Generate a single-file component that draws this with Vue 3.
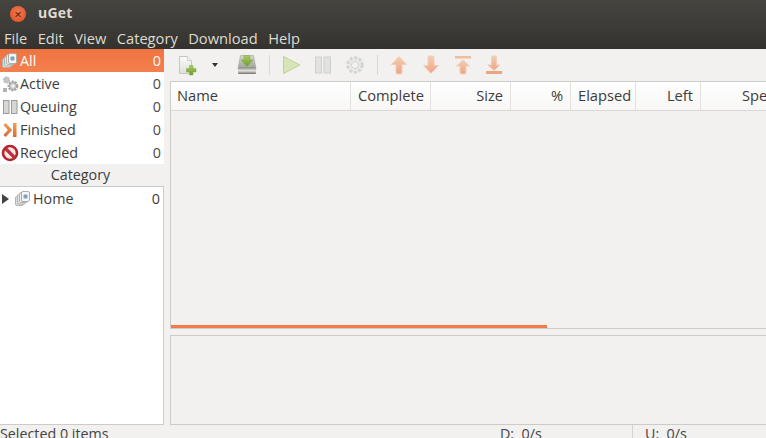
<script setup>
const states = [
  { name: 'All', icon: 'all', active: true },
  { name: 'Active', icon: 'active' },
  { name: 'Queuing', icon: 'queue' },
  { name: 'Finished', icon: 'finished' },
  { name: 'Recycled', icon: 'recycled' },
]
const menus = ['File', 'Edit', 'View', 'Category', 'Download', 'Help']
const cols = [
  { label: 'Name', w: 180, left: true },
  { label: 'Complete', w: 80 },
  { label: 'Size', w: 80 },
  { label: '%', w: 60 },
  { label: 'Elapsed', w: 65 },
  { label: 'Left', w: 65 },
  { label: 'Speed', w: 90, left: true, pad: true },
]
</script>

<template>
  <div class="win">
    <svg width="0" height="0" class="defs">
      <defs>
        <linearGradient id="arrow" x1="0" y1="0" x2="0" y2="1"><stop offset="0" stop-color="#f4cdb2"/><stop offset="1" stop-color="#eca584"/></linearGradient>
        <linearGradient id="disk" x1="0" y1="0" x2="0" y2="1"><stop offset="0" stop-color="#d6d6d2"/><stop offset="1" stop-color="#a2a29c"/></linearGradient>
        <linearGradient id="tray" x1="0" y1="0" x2="0" y2="1"><stop offset="0" stop-color="#8c8c86"/><stop offset=".5" stop-color="#e4e4e0"/><stop offset="1" stop-color="#6f6f68"/></linearGradient>
        <linearGradient id="paper" x1="0" y1="0" x2="0" y2="1"><stop offset="0" stop-color="#fbfbf9"/><stop offset="1" stop-color="#dededa"/></linearGradient>
        <linearGradient id="green" x1="0" y1="0" x2="0" y2="1"><stop offset="0" stop-color="#a9cd62"/><stop offset="1" stop-color="#6f9c2d"/></linearGradient>
        <linearGradient id="fin" x1="0" y1="0" x2="0" y2="1"><stop offset="0" stop-color="#f0a05a"/><stop offset="1" stop-color="#dd6a2e"/></linearGradient>
        <g id="stack">
          <rect x="1.500" y="6.500" width="8" height="9" rx="1.500" fill="#dcdcda" stroke="#b4b4b2"/>
          <rect x="3.500" y="4.500" width="8" height="9.500" rx="1.500" fill="#e6e6e4" stroke="#b4b4b2"/>
          <rect x="5.500" y="2.500" width="8" height="10" rx="1.500" fill="#eeeeec" stroke="#b4b4b2"/>
          <rect x="7.500" y="1.500" width="8" height="10" rx="1.500" fill="#f6f6f4" stroke="#acacac"/>
          <rect x="9.500" y="4.500" width="4" height="4" rx="1" fill="#7f9fc4"/>
        </g>
      </defs>
    </svg>

    <header class="titlebar">
      <div class="close"><span>×</span></div>
      <div class="title">uGet</div>
    </header>
    <nav class="menubar">
      <span v-for="m in menus" :key="m" class="menu">{{ m }}</span>
    </nav>

    <div class="body">
      <aside class="side">
        <ul class="states">
          <li v-for="s in states" :key="s.name" class="state" :class="{ on: s.active }">
            <svg class="sicon" width="18" height="18" viewBox="0 0 18 18">
              <use v-if="s.icon === 'all'" href="#stack" />
              <g v-else-if="s.icon === 'active'">
                <circle cx="12" cy="11" r="4.200" fill="#c9c9c7" stroke="#a2a2a0" stroke-width="2.400" stroke-dasharray="2 1"/>
                <circle cx="12" cy="11" r="1.700" fill="#f2f2f0"/>
                <circle cx="5.500" cy="5" r="3" fill="#c6c6c4" stroke="#adadab" stroke-dasharray="2 1"/>
                <rect x="2" y="13" width="4" height="4" fill="#b2b2b0"/>
              </g>
              <g v-else-if="s.icon === 'queue'">
                <rect x="2.500" y="2.500" width="5.500" height="13" fill="#d6d6d4" stroke="#9a9a98"/>
                <rect x="10.500" y="2.500" width="5.500" height="13" fill="#d6d6d4" stroke="#9a9a98"/>
              </g>
              <g v-else-if="s.icon === 'finished'">
                <path d="M3.500 3l5.500 6-5.500 6" fill="none" stroke="url(#fin)" stroke-width="3.200"/>
                <rect x="12" y="2" width="3.500" height="14" fill="url(#fin)"/>
              </g>
              <g v-else>
                <circle cx="9" cy="9" r="7" fill="#f6e9e6" stroke="#b5252d" stroke-width="2.600"/>
                <path d="M4.500 4.500l9 9" stroke="#c0303a" stroke-width="3.200"/>
              </g>
            </svg>
            <span class="sname">{{ s.name }}</span>
            <span class="scount">0</span>
          </li>
        </ul>
        <div class="cat-head">Category</div>
        <div class="tree">
          <div class="tree-row">
            <span class="expander"></span>
            <svg class="ticon" width="18" height="18" viewBox="0 0 18 18"><use href="#stack" /></svg>
            <span class="tname">Home</span>
            <span class="tcount">0</span>
          </div>
        </div>
      </aside>

      <main class="main">
        <div class="toolbar">
          <svg class="b-new" width="22" height="22" viewBox="0 0 22 22">
            <path d="M1.500 2.500h8l4 4v13h-12z" fill="url(#paper)" stroke="#c6c6c2"/>
            <path d="M9.500 2.500v4h4" fill="#f4f4f2" stroke="#d0d0cc"/>
            <path d="M11.500 11.500h3.500v3h3v3.500h-3v3h-3.500v-3h-3v-3.500h3z" fill="url(#green)" stroke="#7fa83a" stroke-width=".5"/>
          </svg>
          <span class="caret"></span>
          <svg class="b-dl" width="22" height="22" viewBox="0 0 22 22">
            <path d="M3.500 1.500h13l2.500 13H1z" fill="url(#disk)" stroke="#a6a6a0" stroke-width=".6"/>
            <rect x="1" y="13.500" width="18" height="6.500" rx="1" fill="url(#tray)"/>
            <path d="M7 1.500h6v4.500h3l-6 6.500-6-6.500h3z" fill="url(#green)" stroke="#7fa83a" stroke-width=".5"/>
          </svg>
          <i class="sep s1"></i>
          <svg class="b-play" width="20" height="20" viewBox="0 0 20 20">
            <path d="M1.500 1.500L18 10 1.500 18.500z" fill="#d9e5b8" stroke="#bfd294"/>
          </svg>
          <svg class="b-pause" width="18" height="18" viewBox="0 0 18 18">
            <rect x="1.500" y="1" width="6" height="16" fill="#e2e2df" stroke="#d0d0cd"/>
            <rect x="10" y="1" width="6.500" height="16" fill="#e2e2df" stroke="#d0d0cd"/>
          </svg>
          <svg class="b-gear" width="20" height="20" viewBox="0 0 20 20">
            <circle cx="10" cy="10" r="7.200" fill="#ebebe8" stroke="#d4d4d1" stroke-width="3" stroke-dasharray="3 1.700"/>
            <circle cx="10" cy="10" r="3.600" fill="#f2f1f0" stroke="#d2d2cf"/>
          </svg>
          <i class="sep s2"></i>
          <svg class="b-up" width="18" height="20" viewBox="0 0 18 20">
            <path d="M9 1.500L16.500 9.500H12V17Q12 19 10.500 19H7.500Q6 19 6 17V9.500H1.500z" fill="url(#arrow)" stroke="#f3cdb6" stroke-linejoin="round"/>
          </svg>
          <svg class="b-down" width="18" height="20" viewBox="0 0 18 20">
            <path d="M9 18.500L16.500 10.500H12V3Q12 1 10.500 1H7.500Q6 1 6 3V10.500H1.500z" fill="url(#arrow)" stroke="#f3cdb6" stroke-linejoin="round"/>
          </svg>
          <svg class="b-top" width="18" height="20" viewBox="0 0 18 20">
            <rect x="1" y="1" width="16" height="2.500" fill="#f0bd9c"/>
            <path d="M9 5L15.500 11H12V17Q12 19 10.500 19H7.500Q6 19 6 17V11H2.500z" fill="url(#arrow)" stroke="#f3cdb6" stroke-linejoin="round"/>
          </svg>
          <svg class="b-bottom" width="18" height="20" viewBox="0 0 18 20">
            <rect x="1" y="16" width="16" height="3" fill="#eca584"/>
            <path d="M9 15.500L15 10H11.500V3Q11.500 1 10 1H8Q6.500 1 6.500 3V10H3z" fill="url(#arrow)" stroke="#f3cdb6" stroke-linejoin="round"/>
          </svg>
        </div>

        <section class="list">
          <div class="thead">
            <div
              v-for="c in cols"
              :key="c.label"
              class="th"
              :class="{ left: c.left, pad: c.pad }"
              :style="{ width: c.w + 'px' }"
            >{{ c.label }}</div>
          </div>
          <div class="tbody"></div>
          <div class="scroll"><div class="thumb"></div></div>
        </section>

        <section class="detail"></section>
      </main>
    </div>

    <footer class="status">
      <span class="st-sel">Selected 0 items</span>
      <span class="st-d">D:&nbsp; 0/s</span>
      <span class="st-u">U:&nbsp; 0/s</span>
    </footer>
  </div>
</template>

<style>
html, body { margin: 0; overflow: hidden; }
</style>

<style scoped>
.win {
  width: 766px; height: 438px; overflow: hidden;
  display: flex; flex-direction: column;
  background: #f2f1f0; color: #3c3c3c;
  font-family: "Open Sans", "Noto Sans", sans-serif;
  font-size: 14.3px;
}
.defs { position: absolute; }
.titlebar {
  height: 27px; flex: none; display: flex; align-items: center;
  background: linear-gradient(#45443f, #3c3b37);
}
.close {
  width: 16px; height: 16px; margin-left: 10px; border-radius: 50%;
  background: radial-gradient(circle at 50% 40%, #f47a4f, #dc4a22);
  display: flex; align-items: center; justify-content: center;
  color: #4a1d10; font-size: 13px; line-height: 16px;
}
.title { margin: 0 0 3px 12px; color: #dfdbd2; font-weight: 700; font-size: 14px; letter-spacing: .2px; }
.menubar {
  height: 22px; flex: none; display: flex; padding-left: 4px; gap: 10.5px; align-items: center;
  background: linear-gradient(#3c3b37, #33322e);
  color: #dfdbd2; font-size: 14.67px;
}
.body { flex: 1; display: flex; min-height: 0; }
.side { width: 164px; flex: none; display: flex; flex-direction: column; }
.states { margin: 0; padding: 0; list-style: none; background: #fff; }
.state { height: 23px; display: flex; align-items: center; padding: 0 3px 0 1px; box-sizing: border-box; }
.state.on { background: linear-gradient(#ef7440, #f47f4e); color: #fff; }
.sicon { flex: none; }
.sname { margin-left: 1px; flex: 1; }
.scount { color: #4a4a4a; }
.state.on .scount { color: #fff; }
.cat-head { height: 22px; line-height: 22px; text-align: center; padding-right: 3px; }
.tree { flex: 1; background: #fff; border: 1px solid #cdcbc7; border-left: none; }
.tree-row { height: 23px; display: flex; align-items: center; padding: 0 3px 0 2px; }
.expander {
  width: 0; height: 0; border-left: 7px solid #444; border-top: 5px solid transparent; border-bottom: 5px solid transparent;
}
.ticon { margin-left: 5px; flex: none; }
.tname { margin-left: 1px; flex: 1; }
.main { flex: 1; min-width: 0; display: flex; flex-direction: column; margin-left: 6px; }
.toolbar { height: 32px; flex: none; display: flex; align-items: center; }
.toolbar svg { flex: none; }
.b-new { margin-left: 8px; }
.caret {
  margin-left: 12px; width: 0; height: 0;
  border-top: 4px solid #333; border-left: 3.500px solid transparent; border-right: 3.500px solid transparent;
}
.b-dl { margin-left: 19px; }
.sep { width: 1px; height: 20px; background: #dad8d4; flex: none; }
.s1 { margin-left: 10px; }
.b-play { margin-left: 12px; }
.b-pause { margin-left: 12px; }
.b-gear { margin-left: 13px; }
.s2 { margin-left: 12px; }
.b-up { margin-left: 12px; }
.b-down { margin-left: 14px; }
.b-top { margin-left: 14px; }
.b-bottom { margin-left: 13px; }
.list {
  height: 248px; flex: none; display: flex; flex-direction: column;
  border-top: 1px solid #cdcbc7; border-left: 1px solid #cdcbc7; border-bottom: 1px solid #cdcbc7;
  box-sizing: border-box;
}
.thead {
  height: 28px; flex: none; display: flex;
  background: linear-gradient(#fff, #f8f7f6);
  border-bottom: 1px solid #dcdad6;
  font-size: 14.67px;
}
.th {
  flex: none; box-sizing: border-box; line-height: 27px; text-align: right; padding: 0 7px;
  border-right: 1px solid #e3e1dd; white-space: nowrap;
}
.th.left { text-align: left; padding-left: 6px; }
.th.pad { padding-left: 41px; border-right: none; }
.tbody { flex: 1; }
.scroll { height: 3px; flex: none; }
.thumb { width: 376px; height: 3px; background: #f47b46; }
.detail {
  flex: 1; margin-top: 6px; border: 1px solid #cdcbc7; border-right: none; box-sizing: border-box;
}
.status {
  height: 13px; flex: none; display: flex; line-height: 18px; overflow: hidden; color: #444; font-size: 14.3px;
}
.st-sel { width: 500px; }
.st-d { width: 133px; box-sizing: border-box; border-right: 1px solid #d6d4d0; }
.st-u { margin-left: 12px; }
</style>
